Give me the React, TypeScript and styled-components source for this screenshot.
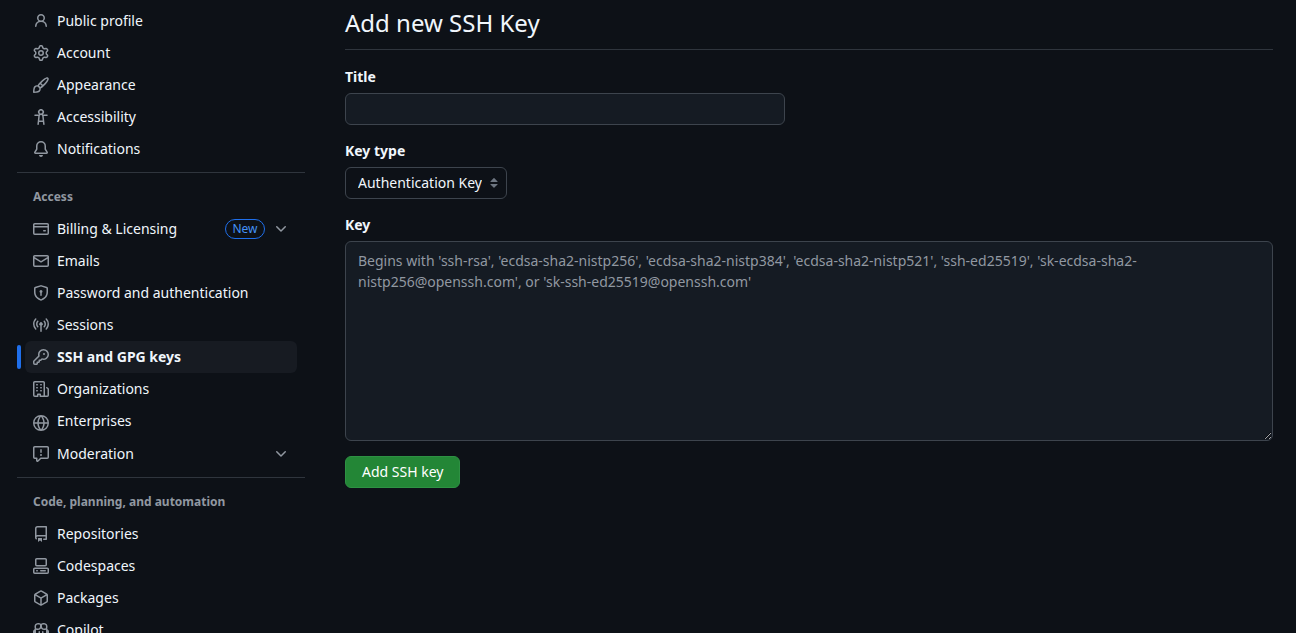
import React from 'react';
import styled, { createGlobalStyle } from 'styled-components';

const colors = {
  canvas: '#0d1117',
  inset: '#151b23',
  active: '#171b22',
  border: '#3d444d',
  divider: '#2f353d',
  text: '#f0f6fc',
  muted: '#9198a1',
  accent: '#1f6feb',
  accentText: '#4493f8',
  success: '#238636',
};

const GlobalStyle = createGlobalStyle`
  * { box-sizing: border-box; }
  html { scrollbar-width: none; background: ${colors.canvas}; color-scheme: dark; }
  body {
    margin: 0;
    background: ${colors.canvas};
    color: ${colors.text};
    font: 14px/21px 'Noto Sans', Helvetica, Arial, sans-serif;
  }
  input, select, textarea, button { font: inherit; color: inherit; margin: 0; }
`;

const icons = {
  person:
    'M10.561 8.073a6.005 6.005 0 0 1 3.432 5.142.75.75 0 1 1-1.498.07 4.5 4.5 0 0 0-8.99 0 .75.75 0 0 1-1.498-.07 6.004 6.004 0 0 1 3.431-5.142 3.999 3.999 0 1 1 5.123 0ZM10.5 5a2.5 2.5 0 1 0-5 0 2.5 2.5 0 0 0 5 0Z',
  gear:
    'M8 0a8.2 8.2 0 0 1 .701.031C9.444.095 9.99.645 10.16 1.29l.288 1.107c.018.066.079.158.212.224.231.114.454.243.668.386.123.082.233.09.299.071l1.103-.303c.644-.176 1.392.021 1.82.63.27.385.506.792.704 1.218.315.675.111 1.422-.364 1.891l-.814.806c-.049.048-.098.147-.088.294.016.257.016.515 0 .772-.01.147.038.246.088.294l.814.806c.475.469.679 1.216.364 1.891a7.977 7.977 0 0 1-.704 1.217c-.428.61-1.176.807-1.82.63l-1.102-.302c-.067-.019-.177-.011-.3.071a5.909 5.909 0 0 1-.668.386c-.133.066-.194.158-.211.224l-.29 1.106c-.168.646-.715 1.196-1.458 1.26a8.006 8.006 0 0 1-1.402 0c-.743-.064-1.289-.614-1.458-1.26l-.289-1.106c-.018-.066-.079-.158-.212-.224a5.738 5.738 0 0 1-.668-.386c-.123-.082-.233-.09-.299-.071l-1.103.303c-.644.176-1.392-.021-1.82-.63a8.12 8.12 0 0 1-.704-1.218c-.315-.675-.111-1.422.363-1.891l.815-.806c.05-.048.098-.147.088-.294a6.214 6.214 0 0 1 0-.772c.01-.147-.038-.246-.088-.294l-.815-.806C.635 6.045.431 5.298.746 4.623a7.92 7.92 0 0 1 .704-1.217c.428-.61 1.176-.807 1.82-.63l1.102.302c.067.019.177.011.3-.071.214-.143.437-.272.668-.386.133-.066.194-.158.211-.224l.29-1.106C6.009.645 6.556.095 7.299.03 7.53.01 7.764 0 8 0Zm-.571 1.525c-.036.003-.108.036-.137.146l-.289 1.105c-.147.561-.549.967-.998 1.189-.173.086-.34.183-.5.29-.417.278-.97.423-1.529.27l-1.103-.303c-.109-.03-.175.016-.195.045-.22.312-.412.644-.573.99-.014.031-.021.11.059.19l.815.806c.411.406.562.957.53 1.456a4.709 4.709 0 0 0 0 .582c.032.499-.119 1.05-.53 1.456l-.815.806c-.081.08-.073.159-.059.19.162.346.353.677.573.989.02.03.085.076.195.046l1.102-.303c.56-.153 1.113-.008 1.53.27.161.107.328.204.501.29.447.222.85.629.997 1.189l.289 1.105c.029.109.101.143.137.146a6.6 6.6 0 0 0 1.142 0c.036-.003.108-.036.137-.146l.289-1.105c.147-.561.549-.967.998-1.189.173-.086.34-.183.5-.29.417-.278.97-.423 1.529-.27l1.103.303c.109.029.175-.016.195-.045.22-.313.411-.644.573-.99.014-.031.021-.11-.059-.19l-.815-.806c-.411-.406-.562-.957-.53-1.456a4.709 4.709 0 0 0 0-.582c-.032-.499.119-1.05.53-1.456l.815-.806c.081-.08.073-.159.059-.19a6.464 6.464 0 0 0-.573-.989c-.02-.03-.085-.076-.195-.046l-1.102.303c-.56.153-1.113.008-1.53-.27a4.44 4.44 0 0 0-.501-.29c-.447-.222-.85-.629-.997-1.189l-.289-1.105c-.029-.11-.101-.143-.137-.146a6.6 6.6 0 0 0-1.142 0ZM11 8a3 3 0 1 1-6 0 3 3 0 0 1 6 0ZM9.5 8a1.5 1.5 0 1 0-3.001.001A1.5 1.5 0 0 0 9.5 8Z',
  paintbrush:
    'M11.134 1.535c.7-.509 1.416-.942 2.076-1.155.649-.21 1.463-.267 2.069.34.603.601.568 1.411.368 2.07-.202.668-.624 1.39-1.125 2.096-1.011 1.424-2.496 2.987-3.775 4.249-1.098 1.084-2.132 1.839-3.04 2.3a3.744 3.744 0 0 1-1.055 3.217c-.431.431-1.065.691-1.657.861-.614.177-1.294.287-1.914.357A21.151 21.151 0 0 1 .797 16H.743l.007-.75H.749L.742 16a.75.75 0 0 1-.743-.742l.743-.008-.742.007v-.054a21.25 21.25 0 0 1 .13-2.284c.067-.647.187-1.287.358-1.914.17-.591.43-1.226.86-1.657a3.746 3.746 0 0 1 3.227-1.054c.466-.893 1.225-1.907 2.314-2.982 1.271-1.255 2.833-2.75 4.246-3.777ZM1.62 13.089c-.051.464-.086.929-.104 1.395.466-.018.932-.053 1.396-.104a10.511 10.511 0 0 0 1.668-.309c.526-.151.856-.325 1.011-.48a2.25 2.25 0 1 0-3.182-3.182c-.155.155-.329.485-.48 1.01a10.515 10.515 0 0 0-.309 1.67Zm10.396-10.34c-1.224.89-2.605 2.189-3.822 3.384l1.718 1.718c1.21-1.205 2.51-2.597 3.387-3.833.47-.662.78-1.227.912-1.662.134-.444.032-.551.009-.575h-.001V1.78c-.014-.014-.113-.113-.548.027-.432.14-.995.462-1.655.942Zm-4.832 7.266-.001.001a9.859 9.859 0 0 0 1.63-1.142L7.155 7.216a9.7 9.7 0 0 0-1.161 1.607c.482.302.889.71 1.19 1.192Z',
  accessibility:
    'M9.923 5.302c.063.063.122.129.178.198H14A.75.75 0 0 1 14 7h-3.3l.578 5.163.362 2.997a.75.75 0 0 1-1.49.18L9.868 13H6.132l-.282 2.34a.75.75 0 0 1-1.49-.18l.362-2.997L5.3 7H2a.75.75 0 0 1 0-1.5h3.9a2.54 2.54 0 0 1 .176-.198 3 3 0 1 1 3.847 0ZM9.2 7.073h-.001a1.206 1.206 0 0 0-2.398 0L6.305 11.5h3.39ZM9.5 3a1.5 1.5 0 1 0-3.001.001A1.5 1.5 0 0 0 9.5 3Z',
  bell:
    'M8 16a2 2 0 0 0 1.985-1.75c.017-.137-.097-.25-.235-.25h-3.5c-.138 0-.252.113-.235.25A2 2 0 0 0 8 16ZM3 5a5 5 0 0 1 10 0v2.947c0 .05.015.098.042.139l1.703 2.555A1.519 1.519 0 0 1 13.482 13H2.518a1.516 1.516 0 0 1-1.263-2.36l1.703-2.554A.255.255 0 0 0 3 7.947Zm5-3.5A3.5 3.5 0 0 0 4.5 5v2.947c0 .346-.102.683-.294.97l-1.703 2.556a.017.017 0 0 0-.003.01l.001.006c0 .002.002.004.004.006l.006.004.007.001h10.964l.007-.001.006-.004.004-.006.001-.007a.017.017 0 0 0-.003-.01l-1.703-2.554a1.745 1.745 0 0 1-.294-.97V5A3.5 3.5 0 0 0 8 1.5Z',
  card:
    'M10.75 9a.75.75 0 0 0 0 1.5h1.5a.75.75 0 0 0 0-1.5h-1.5Z M0 3.75C0 2.784.784 2 1.75 2h12.5c.966 0 1.75.784 1.75 1.75v8.5A1.75 1.75 0 0 1 14.25 14H1.75A1.75 1.75 0 0 1 0 12.25ZM14.5 6.5h-13v5.75c0 .138.112.25.25.25h12.5a.25.25 0 0 0 .25-.25Zm0-2.75a.25.25 0 0 0-.25-.25H1.75a.25.25 0 0 0-.25.25V5h13Z',
  mail:
    'M1.75 2h12.5c.966 0 1.75.784 1.75 1.75v8.5A1.75 1.75 0 0 1 14.25 14H1.75A1.75 1.75 0 0 1 0 12.25v-8.5C0 2.784.784 2 1.75 2ZM1.5 12.251c0 .138.112.25.25.25h12.5a.25.25 0 0 0 .25-.25V5.809L8.38 9.397a.75.75 0 0 1-.76 0L1.5 5.809v6.442Zm13-8.181v-.32a.25.25 0 0 0-.25-.25H1.75a.25.25 0 0 0-.25.25v.32L8 7.88Z',
  shield:
    'm8.533.133 5.25 1.68A1.75 1.75 0 0 1 15 3.48V7c0 1.566-.32 3.182-1.303 4.682-.983 1.498-2.585 2.813-5.032 3.855a1.697 1.697 0 0 1-1.33 0c-2.447-1.042-4.049-2.357-5.032-3.855C1.32 10.182 1 8.566 1 7V3.48a1.755 1.755 0 0 1 1.217-1.667l5.25-1.68a1.748 1.748 0 0 1 1.066 0Zm-.61 1.429.001.001-5.25 1.68a.251.251 0 0 0-.174.237V7c0 1.36.275 2.666 1.057 3.859.784 1.194 2.121 2.342 4.366 3.298a.196.196 0 0 0 .154 0c2.245-.957 3.582-2.103 4.366-3.297C13.225 9.666 13.5 8.358 13.5 7V3.48a.25.25 0 0 0-.174-.238l-5.25-1.68a.25.25 0 0 0-.153 0ZM9.5 6.5c0 .536-.286 1.032-.75 1.3v2.45a.75.75 0 0 1-1.5 0V7.8A1.5 1.5 0 1 1 9.5 6.5Z',
  broadcast:
    'M8.75 8.582v5.668a.75.75 0 0 1-1.5 0V8.582a1.75 1.75 0 1 1 1.5 0Zm3.983-7.125a.75.75 0 0 1 1.06.026A7.976 7.976 0 0 1 16 7c0 2.139-.84 4.083-2.207 5.517a.75.75 0 1 1-1.086-1.034A6.474 6.474 0 0 0 14.5 7a6.474 6.474 0 0 0-1.793-4.483.75.75 0 0 1 .026-1.06Zm-9.466 0c.3.286.312.76.026 1.06A6.474 6.474 0 0 0 1.5 7a6.47 6.47 0 0 0 1.793 4.483.75.75 0 0 1-1.086 1.034A7.973 7.973 0 0 1 0 7c0-2.139.84-4.083 2.207-5.517a.75.75 0 0 1 1.06-.026Zm8.556 2.321A4.988 4.988 0 0 1 13 7a4.988 4.988 0 0 1-1.177 3.222.75.75 0 1 1-1.146-.967A3.487 3.487 0 0 0 11.5 7c0-.86-.309-1.645-.823-2.255a.75.75 0 0 1 1.146-.967Zm-6.492.958A3.48 3.48 0 0 0 4.5 7a3.48 3.48 0 0 0 .823 2.255.75.75 0 0 1-1.146.967A4.981 4.981 0 0 1 3 7a4.982 4.982 0 0 1 1.188-3.236.75.75 0 1 1 1.143.972Z',
  key:
    'M10.5 0a5.499 5.499 0 1 1-1.288 10.848l-.932.932a.749.749 0 0 1-.53.22H7v.75a.749.749 0 0 1-.22.53l-.5.5a.749.749 0 0 1-.53.22H5v.75a.749.749 0 0 1-.22.53l-.5.5a.749.749 0 0 1-.53.22h-2A1.75 1.75 0 0 1 0 14.25v-2c0-.199.079-.389.22-.53l4.932-4.932A5.5 5.5 0 0 1 10.5 0Zm-4 5.5c-.001.431.069.86.205 1.269a.75.75 0 0 1-.181.768L1.5 12.56v1.69c0 .138.112.25.25.25h1.69l.06-.06v-1.19a.75.75 0 0 1 .75-.75h1.19l.06-.06v-1.19a.75.75 0 0 1 .75-.75h1.19l1.023-1.025a.75.75 0 0 1 .768-.18A4 4 0 1 0 6.5 5.5ZM11 6a1 1 0 1 1 0-2 1 1 0 0 1 0 2Z',
  organization:
    'M1.75 16A1.75 1.75 0 0 1 0 14.25V1.75C0 .784.784 0 1.75 0h8.5C11.216 0 12 .784 12 1.75v12.5c0 .085-.006.168-.018.25h2.268a.25.25 0 0 0 .25-.25V8.285a.25.25 0 0 0-.111-.208l-1.055-.703a.749.749 0 1 1 .832-1.248l1.055.703c.487.325.779.871.779 1.456v5.965A1.75 1.75 0 0 1 14.25 16h-3.5a.766.766 0 0 1-.197-.026c-.099.017-.2.026-.303.026h-3a.75.75 0 0 1-.75-.75V14h-1v1.25a.75.75 0 0 1-.75.75Zm-.25-1.75c0 .138.112.25.25.25H4v-1.25a.75.75 0 0 1 .75-.75h2.5a.75.75 0 0 1 .75.75v1.25h2.25a.25.25 0 0 0 .25-.25V1.75a.25.25 0 0 0-.25-.25h-8.5a.25.25 0 0 0-.25.25ZM3.75 6h.5a.75.75 0 0 1 0 1.5h-.5a.75.75 0 0 1 0-1.5ZM3 3.75A.75.75 0 0 1 3.75 3h.5a.75.75 0 0 1 0 1.5h-.5A.75.75 0 0 1 3 3.75Zm4 3A.75.75 0 0 1 7.75 6h.5a.75.75 0 0 1 0 1.5h-.5A.75.75 0 0 1 7 6.75ZM7.75 3h.5a.75.75 0 0 1 0 1.5h-.5a.75.75 0 0 1 0-1.5ZM3 9.75A.75.75 0 0 1 3.75 9h.5a.75.75 0 0 1 0 1.5h-.5A.75.75 0 0 1 3 9.75ZM7.75 9h.5a.75.75 0 0 1 0 1.5h-.5a.75.75 0 0 1 0-1.5Z',
  globe:
    'M8 0a8 8 0 1 1 0 16A8 8 0 0 1 8 0ZM5.78 8.75a9.64 9.64 0 0 0 1.363 4.177c.255.426.542.832.857 1.215.245-.296.551-.705.857-1.215A9.64 9.64 0 0 0 10.22 8.75Zm4.44-1.5a9.64 9.64 0 0 0-1.363-4.177c-.307-.51-.612-.919-.857-1.215a9.927 9.927 0 0 0-.857 1.215A9.64 9.64 0 0 0 5.78 7.25Zm-5.944 1.5H1.543a6.507 6.507 0 0 0 4.666 5.5c-.123-.181-.24-.365-.352-.552-.715-1.192-1.437-2.874-1.581-4.948Zm-2.733-1.5h2.733c.144-2.074.866-3.756 1.58-4.948.12-.197.237-.381.353-.552a6.507 6.507 0 0 0-4.666 5.5Zm10.181 1.5c-.144 2.074-.866 3.756-1.58 4.948-.12.197-.237.381-.353.552a6.507 6.507 0 0 0 4.666-5.5Zm2.733-1.5a6.507 6.507 0 0 0-4.666-5.5c.123.181.24.365.353.552.714 1.192 1.436 2.874 1.58 4.948Z',
  report:
    'M0 1.75C0 .784.784 0 1.75 0h12.5C15.216 0 16 .784 16 1.75v9.5A1.75 1.75 0 0 1 14.25 13H8.06l-2.573 2.573A1.458 1.458 0 0 1 3 14.543V13H1.75A1.75 1.75 0 0 1 0 11.25Zm1.75-.25a.25.25 0 0 0-.25.25v9.5c0 .138.112.25.25.25h2a.75.75 0 0 1 .75.75v2.19l2.72-2.72a.749.749 0 0 1 .53-.22h6.5a.25.25 0 0 0 .25-.25v-9.5a.25.25 0 0 0-.25-.25Zm7 2.25v2.5a.75.75 0 0 1-1.5 0v-2.5a.75.75 0 0 1 1.5 0ZM9 9a1 1 0 1 1-2 0 1 1 0 0 1 2 0Z',
  repo:
    'M2 2.5A2.5 2.5 0 0 1 4.5 0h8.75a.75.75 0 0 1 .75.75v12.5a.75.75 0 0 1-.75.75h-2.5a.75.75 0 0 1 0-1.5h1.75v-2h-8a1 1 0 0 0-.714 1.7.75.75 0 1 1-1.072 1.05A2.495 2.495 0 0 1 2 11.5Zm10.5-1h-8a1 1 0 0 0-1 1v6.708A2.486 2.486 0 0 1 4.5 9h8ZM5 12.25a.25.25 0 0 1 .25-.25h3.5a.25.25 0 0 1 .25.25v3.25a.25.25 0 0 1-.4.2l-1.45-1.087a.249.249 0 0 0-.3 0L5.4 15.7a.25.25 0 0 1-.4-.2Z',
  codespaces:
    'M0 11.25c0-.966.784-1.75 1.75-1.75h12.5c.966 0 1.75.784 1.75 1.75v3A1.75 1.75 0 0 1 14.25 16H1.75A1.75 1.75 0 0 1 0 14.25Zm2-9.5C2 .784 2.784 0 3.75 0h8.5C13.216 0 14 .784 14 1.75v5a1.75 1.75 0 0 1-1.75 1.75h-8.5A1.75 1.75 0 0 1 2 6.75Zm1.75-.25a.25.25 0 0 0-.25.25v5c0 .138.112.25.25.25h8.5a.25.25 0 0 0 .25-.25v-5a.25.25 0 0 0-.25-.25Zm-2 9.5a.25.25 0 0 0-.25.25v3c0 .138.112.25.25.25h12.5a.25.25 0 0 0 .25-.25v-3a.25.25 0 0 0-.25-.25Z M7 12.75a.75.75 0 0 1 .75-.75h4.5a.75.75 0 0 1 0 1.5h-4.5a.75.75 0 0 1-.75-.75Zm-4 0a.75.75 0 0 1 .75-.75h.5a.75.75 0 0 1 0 1.5h-.5a.75.75 0 0 1-.75-.75Z',
  package:
    'm8.878.392 5.25 3.045c.54.314.872.89.872 1.514v6.098a1.75 1.75 0 0 1-.872 1.514l-5.25 3.045a1.75 1.75 0 0 1-1.756 0l-5.25-3.045A1.75 1.75 0 0 1 1 11.049V4.951c0-.624.332-1.201.872-1.514L7.122.392a1.75 1.75 0 0 1 1.756 0ZM7.875 1.69l-4.63 2.685L8 7.133l4.755-2.758-4.63-2.685a.248.248 0 0 0-.25 0ZM2.5 5.677v5.372c0 .09.047.171.125.216l4.625 2.683V8.432Zm6.25 8.271 4.625-2.683a.25.25 0 0 0 .125-.216V5.677L8.75 8.432Z',
  copilot:
    'M7.998 15.035c-4.562 0-7.873-2.914-7.998-3.749V9.338c.085-.628.677-1.686 1.588-2.065.013-.07.024-.143.036-.218.029-.183.06-.384.126-.612-.201-.508-.254-1.084-.254-1.656 0-.87.128-1.769.693-2.484.579-.733 1.494-1.124 2.724-1.261 1.206-.134 2.262.034 2.944.765.05.053.096.108.139.165.044-.057.094-.112.143-.165.682-.731 1.738-.899 2.944-.765 1.23.137 2.145.528 2.724 1.261.566.715.693 1.614.693 2.484 0 .572-.053 1.148-.254 1.656.066.228.098.429.126.612.012.076.024.148.037.218.924.385 1.522 1.471 1.591 2.095v1.872c0 .766-3.351 3.795-8.002 3.795Zm0-1.485c2.28 0 4.584-1.11 5.002-1.433V7.862l-.023-.116c-.49.21-1.075.291-1.727.291-1.146 0-2.059-.327-2.71-.991A3.222 3.222 0 0 1 8 6.303a3.24 3.24 0 0 1-.544.743c-.65.664-1.563.991-2.71.991-.652 0-1.236-.081-1.727-.291l-.023.116v4.255c.419.323 2.722 1.433 5.002 1.433ZM6.762 2.83c-.193-.206-.637-.413-1.682-.297-1.019.113-1.479.404-1.713.7-.247.312-.369.789-.369 1.554 0 .793.129 1.171.308 1.371.162.181.519.379 1.442.379.853 0 1.339-.235 1.638-.54.315-.322.527-.827.617-1.553.117-.935-.037-1.395-.241-1.614Zm4.155-.297c-1.044-.116-1.488.091-1.681.297-.204.219-.359.679-.242 1.614.091.726.303 1.231.618 1.553.299.305.784.54 1.638.54.922 0 1.28-.198 1.442-.379.179-.2.308-.578.308-1.371 0-.765-.123-1.242-.37-1.554-.233-.296-.693-.587-1.713-.7Z M6.25 9.037a.75.75 0 0 1 .75.75v1.501a.75.75 0 0 1-1.5 0V9.787a.75.75 0 0 1 .75-.75Zm4.25.75v1.501a.75.75 0 0 1-1.5 0V9.787a.75.75 0 0 1 1.5 0Z',
  chevronDown:
    'M12.78 5.22a.749.749 0 0 1 0 1.06l-4.25 4.25a.749.749 0 0 1-1.06 0L3.22 6.28a.749.749 0 1 1 1.06-1.06L8 8.939l3.72-3.719a.749.749 0 0 1 1.06 0Z',
  upDown:
    'M4.427 9.427l3.396 3.396a.251.251 0 0 0 .354 0l3.396-3.396A.25.25 0 0 0 11.396 9H4.604a.25.25 0 0 0-.177.427ZM4.423 6.47 7.82 3.072a.25.25 0 0 1 .354 0L11.57 6.47a.25.25 0 0 1-.177.427H4.6a.25.25 0 0 1-.177-.427Z',
};

type IconName = keyof typeof icons;

const Svg = styled.svg`
  display: block;
  flex: none;
  width: 16px;
  height: 16px;
  fill: ${colors.muted};
`;

const Icon = ({ name }: { name: IconName }) => (
  <Svg viewBox="0 0 16 16" aria-hidden="true">
    <path d={icons[name]} />
  </Svg>
);

const Page = styled.div`
  display: flex;
  align-items: flex-start;
  gap: 40px;
  padding: 5px 23px 5px 17px;
`;

const Sidebar = styled.nav`
  flex: 0 0 288px;
`;

const NavList = styled.ul`
  list-style: none;
  margin: 0;
  padding: 0 8px;
`;

const Divider = styled.hr`
  height: 1px;
  margin: 7px 0 8px;
  border: 0;
  background: ${colors.divider};
`;

const GroupTitle = styled.h2`
  margin: 0;
  padding: 7px 16px;
  color: ${colors.muted};
  font-size: 12px;
  line-height: 18px;
  font-weight: 700;
`;

const NavItem = styled.li<{ $active?: boolean }>`
  position: relative;
  border-radius: 6px;
  background: ${(p) => (p.$active ? colors.active : 'transparent')};
  font-weight: ${(p) => (p.$active ? 700 : 400)};

  &::before {
    content: ${(p) => (p.$active ? "''" : 'none')};
    position: absolute;
    left: -8px;
    top: 4px;
    width: 4px;
    height: 24px;
    border-radius: 6px;
    background: ${colors.accent};
  }
`;

const NavLink = styled.a<{ $low?: boolean }>`
  display: flex;
  align-items: ${(p) => (p.$low ? 'flex-end' : 'center')};
  gap: 8px;
  width: 100%;
  padding: ${(p) => (p.$low ? '6px 8px 7px' : '6px 8px')};
  border: 0;
  border-radius: 6px;
  background: none;
  color: ${colors.text};
  line-height: 20px;
  text-align: left;
  text-decoration: none;
  cursor: pointer;
`;

const NavText = styled.span`
  flex: 1;
`;

const Badge = styled.span`
  min-width: 40px;
  padding: 0 6px;
  border: 1px solid ${colors.accent};
  border-radius: 10px;
  color: ${colors.accentText};
  font-size: 12px;
  line-height: 18px;
  text-align: center;
`;

const Main = styled.main`
  flex: 1;
  min-width: 0;
`;

const Title = styled.h1`
  margin: 0 0 16px;
  padding-bottom: 8px;
  border-bottom: 1px solid ${colors.divider};
  font-size: 24px;
  line-height: 36px;
  font-weight: 400;
`;

const Form = styled.form`
  display: flex;
  flex-direction: column;
  align-items: flex-start;
  gap: 15px;
`;

const Field = styled.div`
  display: flex;
  flex-direction: column;
  align-items: flex-start;
  gap: 6px;
  width: 100%;
`;

const Label = styled.label`
  font-weight: 700;
`;

const TextInput = styled.input`
  width: 440px;
  max-width: 100%;
  height: 32px;
  padding: 5px 12px;
  border: 1px solid ${colors.border};
  border-radius: 6px;
  background: ${colors.inset};
`;

const SelectBox = styled.div`
  position: relative;

  svg {
    position: absolute;
    right: 5px;
    top: 8px;
    fill: #6e7681;
    pointer-events: none;
  }
`;

const Select = styled.select`
  display: block;
  appearance: none;
  height: 32px;
  padding: 5px 24px 5px 12px;
  border: 1px solid ${colors.border};
  border-radius: 6px;
  background: ${colors.canvas};
  line-height: 20px;
`;

const TextArea = styled.textarea`
  display: block;
  width: 100%;
  height: 200px;
  padding: 8px 12px;
  border: 1px solid ${colors.border};
  border-radius: 6px;
  background: ${colors.inset};
  resize: vertical;

  &::placeholder {
    color: ${colors.muted};
    opacity: 1;
  }
`;

const SubmitButton = styled.button`
  height: 32px;
  padding: 0 16px;
  border: 1px solid #2e9143;
  border-radius: 6px;
  background: ${colors.success};
  color: #fff;
  line-height: 20px;
  cursor: pointer;
`;

type Item = {
  label: string;
  icon: IconName;
  active?: boolean;
  low?: boolean;
  badge?: string;
  expandable?: boolean;
};

const groups: { title?: string; items: Item[] }[] = [
  {
    items: [
      { label: 'Public profile', icon: 'person' },
      { label: 'Account', icon: 'gear' },
      { label: 'Appearance', icon: 'paintbrush' },
      { label: 'Accessibility', icon: 'accessibility' },
      { label: 'Notifications', icon: 'bell' },
    ],
  },
  {
    title: 'Access',
    items: [
      { label: 'Billing & Licensing', icon: 'card', badge: 'New', expandable: true },
      { label: 'Emails', icon: 'mail' },
      { label: 'Password and authentication', icon: 'shield' },
      { label: 'Sessions', icon: 'broadcast' },
      { label: 'SSH and GPG keys', icon: 'key', active: true },
      { label: 'Organizations', icon: 'organization' },
      { label: 'Enterprises', icon: 'globe', low: true },
      { label: 'Moderation', icon: 'report', expandable: true },
    ],
  },
  {
    title: 'Code, planning, and automation',
    items: [
      { label: 'Repositories', icon: 'repo' },
      { label: 'Codespaces', icon: 'codespaces' },
      { label: 'Packages', icon: 'package' },
      { label: 'Copilot', icon: 'copilot' },
    ],
  },
];

const NavRow = ({ item }: { item: Item }) => {
  const content = (
    <>
      <Icon name={item.icon} />
      <NavText>{item.label}</NavText>
      {item.badge && <Badge>{item.badge}</Badge>}
      {item.expandable && <Icon name="chevronDown" />}
    </>
  );
  return (
    <NavItem $active={item.active}>
      {item.expandable ? (
        <NavLink as="button" type="button" aria-expanded={false}>
          {content}
        </NavLink>
      ) : (
        <NavLink href="#" $low={item.low} aria-current={item.active ? 'page' : undefined}>
          {content}
        </NavLink>
      )}
    </NavItem>
  );
};

export default function App() {
  return (
    <>
      <GlobalStyle />
      <Page>
        <Sidebar aria-label="Settings">
          {groups.map((group, index) => (
            <React.Fragment key={index}>
              {index > 0 && <Divider />}
              {group.title && <GroupTitle>{group.title}</GroupTitle>}
              <NavList>
                {group.items.map((item) => (
                  <NavRow key={item.label} item={item} />
                ))}
              </NavList>
            </React.Fragment>
          ))}
        </Sidebar>
        <Main>
          <Title>Add new SSH Key</Title>
          <Form onSubmit={(event) => event.preventDefault()}>
            <Field>
              <Label htmlFor="key-title">Title</Label>
              <TextInput id="key-title" type="text" />
            </Field>
            <Field>
              <Label htmlFor="key-type">Key type</Label>
              <SelectBox>
                <Select id="key-type" defaultValue="authentication">
                  <option value="authentication">Authentication Key</option>
                </Select>
                <Icon name="upDown" />
              </SelectBox>
            </Field>
            <Field>
              <Label htmlFor="key-body">Key</Label>
              <TextArea
                id="key-body"
                placeholder="Begins with 'ssh-rsa', 'ecdsa-sha2-nistp256', 'ecdsa-sha2-nistp384', 'ecdsa-sha2-nistp521', 'ssh-ed25519', 'sk-ecdsa-sha2-nistp256@openssh.com', or 'sk-ssh-ed25519@openssh.com'"
              />
            </Field>
            <SubmitButton type="submit">Add SSH key</SubmitButton>
          </Form>
        </Main>
      </Page>
    </>
  );
}
